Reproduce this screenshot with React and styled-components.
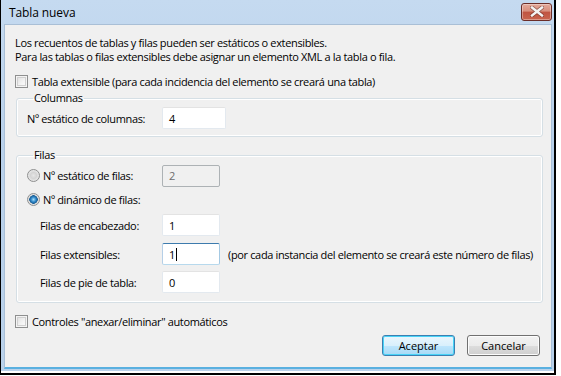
import React from "react";
import styled, { createGlobalStyle } from "styled-components";

const GlobalStyle = createGlobalStyle`
  html, body {
    margin: 0;
    padding: 0;
    background: #ffffff;
  }
  body {
    font-family: "Open Sans", "Noto Sans", sans-serif;
    font-size: 11px;
    letter-spacing: -0.35px;
    color: #000;
  }
`;

const Window = styled.div`
  box-sizing: border-box;
  width: 556px;
  height: 375px;
  display: flex;
  flex-direction: column;
  border-left: 1px solid #000;
  border-right: 2px solid #000;
  border-bottom: 2px solid #000;
  background: linear-gradient(to bottom, #c5daf0 0%, #b8d0ea 40%, #b9d1ea 100%);
  padding: 0 2px 4px 3px;
  box-shadow: inset 0 -2px 0 #fff;
`;

const TitleBar = styled.div`
  height: 24px;
  flex: none;
  display: flex;
  align-items: center;
  justify-content: space-between;
  padding: 0 0 0 5px;
`;

const Title = styled.span`
  font-size: 12px;
  letter-spacing: -0.1px;
  margin-top: 1px;
`;

const CloseButton = styled.div`
  box-sizing: border-box;
  width: 31px;
  height: 18px;
  margin-top: -1px;
  border: 1px solid #6b2d28;
  border-radius: 3px;
  background: linear-gradient(to bottom, #e3a99b 0%, #d88f7d 45%, #c05441 50%, #c9654f 100%);
  box-shadow: inset 0 0 0 1px rgba(255, 255, 255, 0.35);
  display: flex;
  align-items: center;
  justify-content: center;
`;

const Content = styled.div`
  flex: 1;
  box-sizing: border-box;
  background: #f0f0f0;
  border: 1px solid #a9bfd6;
  border-bottom-color: #5ab0e0;
  border-bottom-width: 2px;
  padding: 11px 9px 0 10px;
  display: flex;
  flex-direction: column;
`;

const Intro = styled.p`
  margin: 0;
  line-height: 14px;
`;

const CheckRow = styled.label`
  display: flex;
  align-items: center;
  gap: 4px;
  height: 14px;
  margin-top: ${(p) => p.$top}px;
`;

const CheckBox = styled.span`
  box-sizing: border-box;
  width: 13px;
  height: 13px;
  border: 1px solid #8e8f8f;
  background: linear-gradient(135deg, #dcdcdc 0%, #f4f4f4 60%, #fdfdfd 100%);
  box-shadow: inset 0 0 0 1px #f4f4f4, inset 0 0 0 2px #d0d0d0;
  flex: none;
`;

const Group = styled.fieldset`
  box-sizing: border-box;
  margin: ${(p) => p.$top}px 0 0 1px;
  width: 527px;
  height: ${(p) => p.$height}px;
  border: 1px solid #d5dfe5;
  border-radius: 3px;
  box-shadow: inset 0 0 0 1px #fff;
  padding: 0 0 0 10px;
  display: flex;
  flex-direction: column;
`;

const Legend = styled.legend`
  padding: 0 1px;
  margin-left: 6px;
  line-height: 12px;
`;

const FieldRow = styled.div`
  display: flex;
  align-items: center;
  height: ${(p) => p.$height || 22}px;
  margin-top: ${(p) => p.$top || 0}px;
  padding-left: ${(p) => p.$indent || 0}px;
`;

const FieldLabel = styled.span`
  width: ${(p) => p.$width}px;
  flex: none;
`;

const TextBox = styled.div`
  box-sizing: border-box;
  width: ${(p) => p.$width || 58}px;
  height: ${(p) => p.$height || 22}px;
  flex: none;
  display: flex;
  align-items: center;
  padding-left: 6px;
  background: ${(p) => (p.$disabled ? "#f0f0f0" : "#fff")};
  color: ${(p) => (p.$disabled ? "#6d6d6d" : "#000")};
  border: 1px solid;
  border-color: ${(p) =>
    p.$focused
      ? "#3d7bad #a4c9e3 #b7d9ed #b5cfe7"
      : p.$disabled
      ? "#adb2b5"
      : "#e3e3e3 #e3e9ef #e3e9ef #e3e9ef"};
  border-radius: 2px;
`;

const Caret = styled.span`
  display: inline-block;
  width: 1px;
  height: 13px;
  background: #000;
  margin-left: 1px;
`;

const Radio = styled.span`
  box-sizing: border-box;
  width: 13px;
  height: 13px;
  border-radius: 50%;
  border: 1px solid #8e8f8f;
  background: ${(p) =>
    p.$checked
      ? "radial-gradient(circle, #a6e0fb 0, #2c84c6 2.5px, #1c5f95 4px, #dadada 4.5px, #f6f6f6 100%)"
      : "radial-gradient(circle, #e6e6e6 0, #d4d4d4 3px, #ececec 6px, #f8f8f8 100%)"};
  flex: none;
  margin-right: 3px;
`;

const Hint = styled.span`
  margin-left: 8px;
`;

const Footer = styled.div`
  margin-top: 7px;
  display: flex;
  justify-content: flex-end;
  gap: 12px;
  padding-right: 2px;
`;

const Button = styled.button`
  box-sizing: border-box;
  width: 73px;
  height: 21px;
  font: inherit;
  color: #000;
  padding: 0;
  border-radius: 3px;
  border: 1px solid ${(p) => (p.$primary ? "#3c7fb1" : "#707070")};
  background: ${(p) =>
    p.$primary
      ? "linear-gradient(to bottom, #eaf6fd 0%, #d9f0fc 50%, #bee6fd 51%, #a7d9f5 100%)"
      : "linear-gradient(to bottom, #f2f2f2 0%, #ebebeb 50%, #dddddd 51%, #cfcfcf 100%)"};
  box-shadow: inset 0 0 0 1px ${(p) => (p.$primary ? "#48d3f7" : "#fcfcfc")};
`;

const CloseIcon = () => (
  <svg width="14" height="11" viewBox="0 0 14 11">
    <path
      d="M2 1.5 L12 9.5 M12 1.5 L2 9.5"
      stroke="#5a2a25"
      strokeWidth="4"
      strokeLinecap="square"
      opacity="0.55"
    />
    <path d="M2 1.5 L12 9.5 M12 1.5 L2 9.5" stroke="#f4f4f4" strokeWidth="2.4" strokeLinecap="square" />
  </svg>
);

export default function App() {
  return (
    <>
      <GlobalStyle />
      <Window>
        <TitleBar>
          <Title>Tabla nueva</Title>
          <CloseButton>
            <CloseIcon />
          </CloseButton>
        </TitleBar>
        <Content>
          <Intro>
            Los recuentos de tablas y filas pueden ser estáticos o extensibles.
            <br />
            Para las tablas o filas extensibles debe asignar un elemento XML a la tabla o fila.
          </Intro>
          <CheckRow $top={10}>
            <CheckBox />
            Tabla extensible (para cada incidencia del elemento se creará una tabla)
          </CheckRow>

          <Group $top={4} $height={45}>
            <Legend>Columnas</Legend>
            <FieldRow $top={3} $height={22}>
              <FieldLabel $width={135}>Nº estático de columnas:</FieldLabel>
              <TextBox $width={64}>4</TextBox>
            </FieldRow>
          </Group>

          <Group $top={12} $height={154}>
            <Legend>Filas</Legend>
            <FieldRow $top={3} $height={23}>
              <Radio />
              <FieldLabel $width={119}>Nº estático de filas:</FieldLabel>
              <TextBox $width={58} $disabled>
                2
              </TextBox>
            </FieldRow>
            <FieldRow $top={1} $height={23}>
              <Radio $checked />
              <FieldLabel $width={119}>Nº dinámico de filas:</FieldLabel>
            </FieldRow>
            <FieldRow $top={3} $indent={13}>
              <FieldLabel $width={122}>Filas de encabezado:</FieldLabel>
              <TextBox>1</TextBox>
            </FieldRow>
            <FieldRow $top={7} $indent={13}>
              <FieldLabel $width={122}>Filas extensibles:</FieldLabel>
              <TextBox $focused>
                1<Caret />
              </TextBox>
              <Hint>(por cada instancia del elemento se creará este número de filas)</Hint>
            </FieldRow>
            <FieldRow $top={6} $indent={13}>
              <FieldLabel $width={122}>Filas de pie de tabla:</FieldLabel>
              <TextBox>0</TextBox>
            </FieldRow>
          </Group>

          <CheckRow $top={11}>
            <CheckBox />
            Controles "anexar/eliminar" automáticos
          </CheckRow>

          <Footer>
            <Button $primary>Aceptar</Button>
            <Button>Cancelar</Button>
          </Footer>
        </Content>
      </Window>
    </>
  );
}
